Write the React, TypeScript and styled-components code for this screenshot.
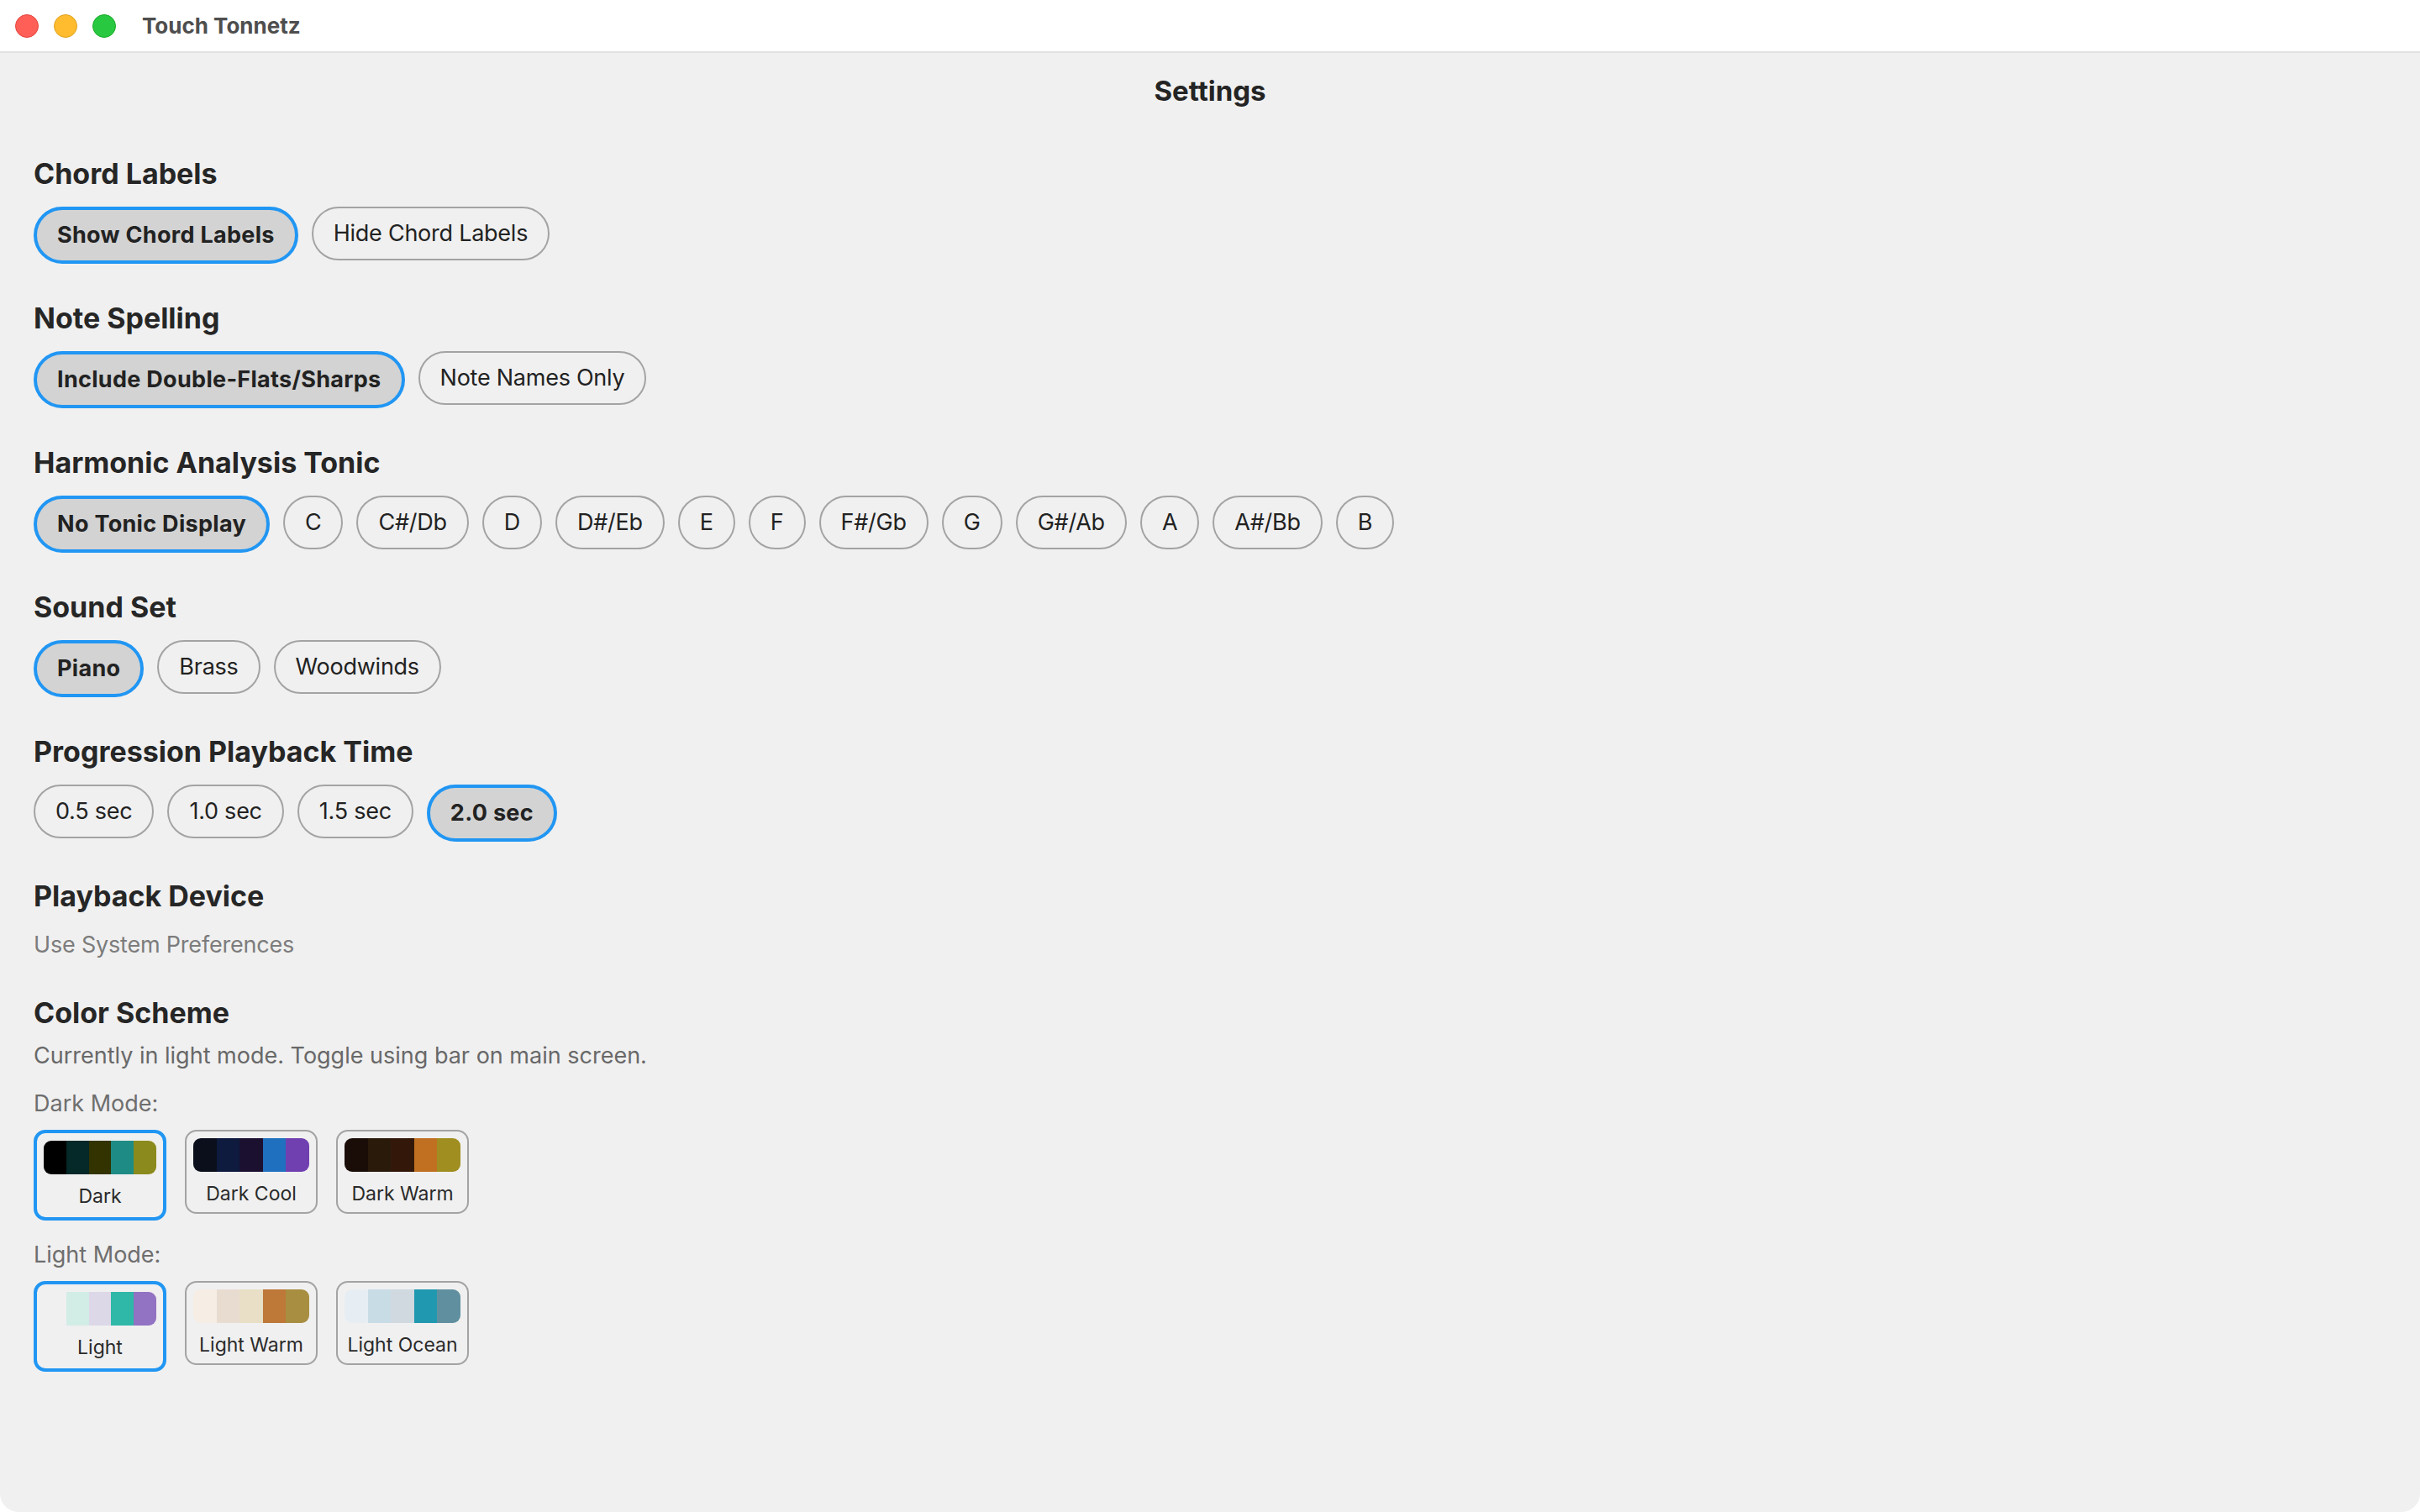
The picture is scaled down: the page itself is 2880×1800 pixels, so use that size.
import styled, { createGlobalStyle } from 'styled-components';

const GlobalStyle = createGlobalStyle`
  html, body {
    margin: 0;
    padding: 0;
    background: #ffffff;
  }

  body {
    font-family: Inter, 'Noto Sans', 'Liberation Sans', sans-serif;
    color: #242424;
  }
`;

type Scheme = {
  name: string;
  colors: string[];
};

const darkSchemes: Scheme[] = [
  { name: 'Dark', colors: ['#000000', '#052828', '#333300', '#1e8c84', '#8b8a1c'] },
  { name: 'Dark Cool', colors: ['#0b0f1c', '#0e1a3e', '#1c1030', '#2070c0', '#7040b0'] },
  { name: 'Dark Warm', colors: ['#1a0d08', '#2a1a0a', '#33180a', '#c07020', '#a08e20'] },
];

const lightSchemes: Scheme[] = [
  { name: 'Light', colors: ['transparent', '#d2ede6', '#dcd8e8', '#2fb8a8', '#9272c2'] },
  { name: 'Light Warm', colors: ['#f6ede4', '#e8dcd0', '#e8dfc6', '#be7838', '#a88e40'] },
  { name: 'Light Ocean', colors: ['#e6eef4', '#c8dce6', '#d0d8e0', '#2098b0', '#6090a0'] },
];

const optionSections = [
  {
    title: 'Chord Labels',
    options: ['Show Chord Labels', 'Hide Chord Labels'],
    selected: 0,
  },
  {
    title: 'Note Spelling',
    options: ['Include Double-Flats/Sharps', 'Note Names Only'],
    selected: 0,
  },
  {
    title: 'Harmonic Analysis Tonic',
    options: ['No Tonic Display', 'C', 'C#/Db', 'D', 'D#/Eb', 'E', 'F', 'F#/Gb', 'G', 'G#/Ab', 'A', 'A#/Bb', 'B'],
    selected: 0,
  },
  {
    title: 'Sound Set',
    options: ['Piano', 'Brass', 'Woodwinds'],
    selected: 0,
  },
  {
    title: 'Progression Playback Time',
    options: ['0.5 sec', '1.0 sec', '1.5 sec', '2.0 sec'],
    selected: 3,
  },
];

const SchemeGroup = ({ schemes, selected }: { schemes: Scheme[]; selected: number }) => (
  <SchemeRow>
    {schemes.map((scheme, idx) => (
      <SchemeCard key={scheme.name} $selected={idx === selected}>
        <Swatch>
          {scheme.colors.map((c, i) => (
            <SwatchCell key={i} $color={c} />
          ))}
        </Swatch>
        <SchemeName>{scheme.name}</SchemeName>
      </SchemeCard>
    ))}
  </SchemeRow>
);

const App = () => {
  return (
    <>
      <GlobalStyle />
      <Window>
        <TitleBar>
          <Lights>
            <Light $fill="#ff5f57" $edge="#e2463f" />
            <Light $fill="#febc2e" $edge="#dea123" />
            <Light $fill="#28c840" $edge="#1aab29" />
          </Lights>
          <WindowTitle>Touch Tonnetz</WindowTitle>
        </TitleBar>

        <Content>
          <PageTitle>Settings</PageTitle>

          {optionSections.map(section => (
            <Section key={section.title}>
              <Heading>{section.title}</Heading>
              <OptionRow>
                {section.options.map((opt, idx) => (
                  <OptionButton key={opt} $selected={idx === section.selected}>
                    {opt}
                  </OptionButton>
                ))}
              </OptionRow>
            </Section>
          ))}

          <Section>
            <Heading $gap={22}>Playback Device</Heading>
            <Note $light>Use System Preferences</Note>
          </Section>

          <Section>
            <Heading $gap={15}>Color Scheme</Heading>
            <Note>Currently in light mode. Toggle using bar on main screen.</Note>
            <ModeLabel>Dark Mode:</ModeLabel>
            <SchemeGroup schemes={darkSchemes} selected={0} />
            <ModeLabel>Light Mode:</ModeLabel>
            <SchemeGroup schemes={lightSchemes} selected={0} />
          </Section>
        </Content>
      </Window>
    </>
  );
};

const Window = styled.div`
  box-sizing: border-box;
  width: 2880px;
  height: 1800px;
  background: #f0f0f0;
  border-radius: 0 0 22px 22px;
  overflow: hidden;
  display: flex;
  flex-direction: column;
`;

const TitleBar = styled.div`
  box-sizing: border-box;
  height: 63px;
  flex-shrink: 0;
  background: #ffffff;
  border-bottom: 2px solid #e2e2e2;
  display: flex;
  align-items: center;
  padding: 0 0 0 18px;
`;

const Lights = styled.div`
  display: flex;
  gap: 18px;
  margin-right: 31px;
`;

const Light = styled.span<{ $fill: string; $edge: string }>`
  box-sizing: border-box;
  width: 28px;
  height: 28px;
  border-radius: 50%;
  background: ${p => p.$fill};
  border: 1px solid ${p => p.$edge};
`;

const WindowTitle = styled.div`
  font-size: 26px;
  font-weight: 700;
  color: #4e4e4e;
`;

const Content = styled.div`
  display: flex;
  flex-direction: column;
  padding: 25px 40px 0;
`;

const PageTitle = styled.h1`
  margin: 0 0 57px;
  text-align: center;
  font-size: 33px;
  line-height: 41px;
  font-weight: 700;
  color: #242424;
`;

const Section = styled.section`
  display: flex;
  flex-direction: column;
  align-items: flex-start;
  margin-bottom: 44px;
`;

const Heading = styled.h2<{ $gap?: number }>`
  margin: 0 0 ${p => p.$gap ?? 19}px;
  font-size: 34px;
  line-height: 41px;
  font-weight: 700;
  color: #262626;
`;

const OptionRow = styled.div`
  display: flex;
  align-items: flex-start;
  flex-wrap: wrap;
  gap: 16px;
`;

const OptionButton = styled.button<{ $selected?: boolean }>`
  box-sizing: border-box;
  font-family: inherit;
  font-size: 27px;
  line-height: 32px;
  padding: 14px 24px;
  border-radius: 999px;
  border: ${p => (p.$selected ? '4px solid #2196f3' : '2px solid #a3a3a3')};
  background: ${p => (p.$selected ? '#d3d3d3' : 'transparent')};
  font-weight: ${p => (p.$selected ? 700 : 400)};
  letter-spacing: ${p => (p.$selected ? '0.3px' : '-0.25px')};
  color: #222222;
  cursor: pointer;
`;

const Note = styled.p<{ $light?: boolean }>`
  margin: 0;
  font-size: 27px;
  line-height: 32px;
  letter-spacing: ${p => (p.$light ? '-0.2px' : '0')};
  color: ${p => (p.$light ? '#7c7c7c' : '#686868')};
`;

const ModeLabel = styled.div`
  margin: 25px 0 15px;
  font-size: 27px;
  line-height: 32px;
  color: #6e6e6e;
`;

const SchemeRow = styled.div`
  display: flex;
  align-items: flex-start;
  gap: 22px;
`;

const SchemeCard = styled.div<{ $selected?: boolean }>`
  box-sizing: border-box;
  width: 158px;
  padding: ${p => (p.$selected ? '9px 8px' : '8px 8px 6px')};
  border-radius: 14px;
  border: ${p => (p.$selected ? '4px solid #2196f3' : '2px solid #a3a3a3')};
  display: flex;
  flex-direction: column;
  align-items: center;
  gap: 10px;
`;

const Swatch = styled.div`
  width: 100%;
  height: 40px;
  display: flex;
  border-radius: 9px;
  overflow: hidden;
`;

const SwatchCell = styled.div<{ $color: string }>`
  flex: 1;
  background: ${p => p.$color};
`;

const SchemeName = styled.div`
  font-size: 23px;
  line-height: 32px;
  color: #2a2a2a;
`;

export default App;
